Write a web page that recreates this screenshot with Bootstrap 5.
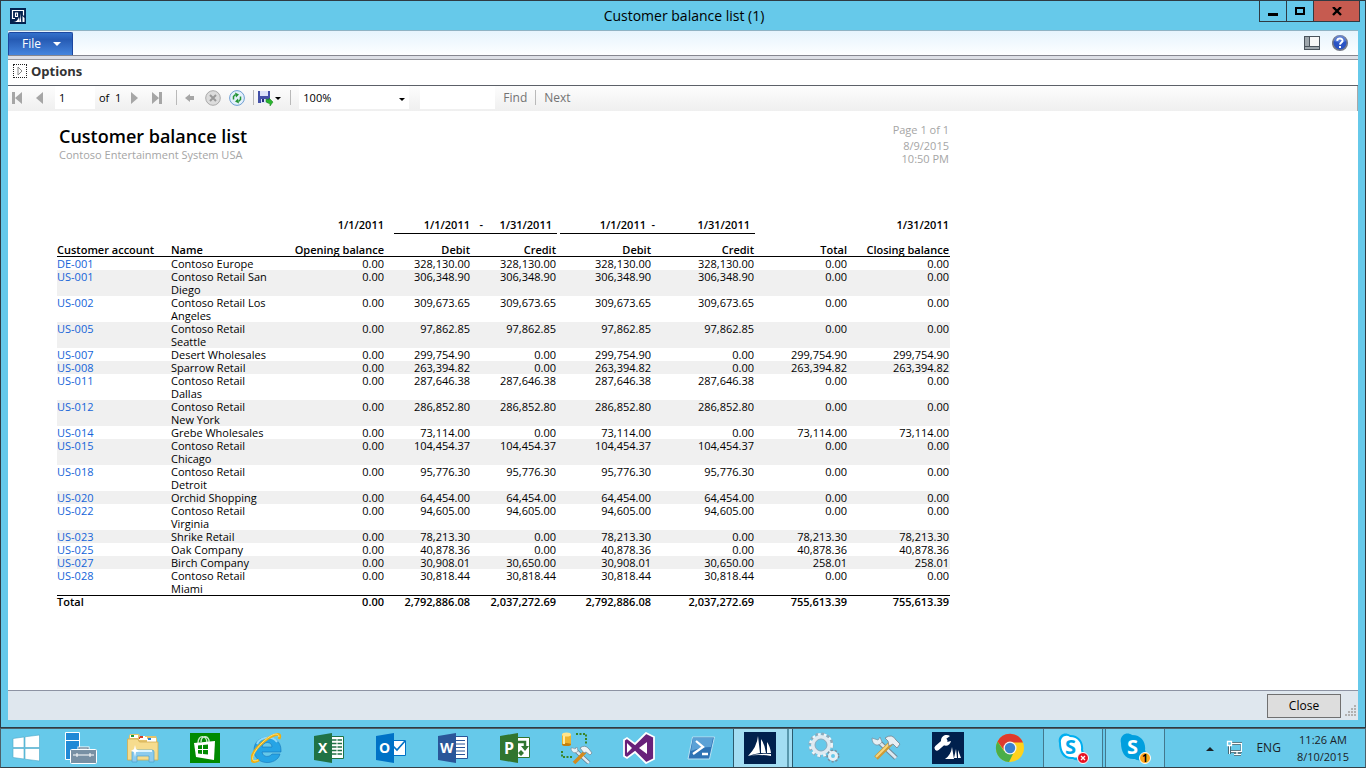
<!DOCTYPE html>
<html lang="en">
<head>
<meta charset="utf-8">
<meta name="viewport" content="width=device-width, initial-scale=1">
<title>Customer balance list (1)</title>
<link href="https://cdn.jsdelivr.net/npm/bootstrap@5.3.0/dist/css/bootstrap.min.css" rel="stylesheet">
<style>
  :root { --sky: #66c9ea; --edge: #2f3a42; }
  body { font-family: "Open Sans", "Noto Sans", sans-serif; font-size: 12px; line-height: 16px; color: #000; background: var(--sky); }
  svg { display: block; flex: none; }
  button { font-family: inherit; color: inherit; }
  .app-window { border: 1px solid var(--edge); padding: 0 7px 7px; min-height: 0; }
  .title-bar { height: 29px; }
  .title-bar h1 { font-size: 14px; line-height: 29px; font-weight: 400; }
  .title-left, .title-right { flex: 1 1 0; }
  .title-right { margin-right: -2px; }
  .win-btn { height: 21px; border: 1px solid var(--edge); border-top: 0; border-right: 0; background: transparent; width: 27px; padding: 0; }
  .win-btn.wide-btn { width: 47px; background: #c65b50; border-right: 1px solid var(--edge); }
  .client { background: #fff; border-top: 1px solid #8fb3c4; min-height: 0; }
  .ribbon { height: 25px; background: linear-gradient(#e6f4fd, #fdfeff); border-bottom: 1px solid #85868f; }
  .file-btn { width: 65px; height: 23px; margin-top: 1px; border: 1px solid #1c47a0; border-bottom: 0; border-radius: 2px 2px 0 0; background: linear-gradient(#3472cc, #265bb4 30%, #4585de); color: #fff; }
  .band { height: 4px; background: #dddfe6; border-bottom: 1px solid #95969d; }
  .options-bar { height: 26px; border-bottom: 1px solid #5c6068; padding: 0 0 4px 5px; }
  .options-bar h2 { font-size: 13px; line-height: 18px; font-weight: 700; color: #333; }
  .expander { width: 14px; height: 14px; border: 1px dotted #222; background: #fff; }
  .viewer-bar { height: 25px; padding-bottom: 2px; background: linear-gradient(#fdfdfd, #efefef); border-right: 1px solid #a8a8a8; color: #000; font-size: 11px; }
  .viewer-bar input, .viewer-bar select { border: 0; background: #fff; height: 23px; font-size: 11px; border-radius: 0; color: #000; }
  .page-box { width: 40px; margin-left: 10px; padding: 0 4px; }
  .zoom-box { width: 110px; appearance: none; padding: 0 4px; }
  .find-box { width: 75px; margin-left: 11px; }
  .rule { width: 1px; height: 15px; background: #b9b9b9; }
  .space-wide { margin-left: 14px; }
  .space-mid { margin-left: 10px; }
  .tool { border: 0; background: transparent; padding: 0; }
  .find-link { color: #737373; font-size: 12px; }
  .report { padding: 12px 0 0 49px; min-height: 0; overflow: hidden; }
  .report-inner { width: 893px; padding: 0 1px 0 2px; }
  .report h3 { font-size: 18px; line-height: 23px; font-weight: 600; margin: 0; padding-top: 2px; -webkit-text-stroke: 0; }
  .muted { color: #a5a5a5; font-size: 11px; line-height: 13px; }
  .page-count { margin-bottom: 3px; }
  .ledger { width: 893px; table-layout: fixed; border-collapse: separate; border-spacing: 0; font-size: 11px; line-height: 13px; margin-top: 53px; }
  .ledger th, .ledger td { padding: 0 1px 0 0; vertical-align: top; text-align: right; }
  .ledger th { font-weight: 600; white-space: nowrap; }
  .ledger b { font-weight: 600; }
  .ledger th:first-child, .ledger td:first-child, .ledger td:nth-child(2), .ledger .lft { text-align: left; }
  .ledger .period th { height: 16px; }
  .ledger .captions th { height: 23px; vertical-align: bottom; border-bottom: 1px solid #000; }
  .ledger tbody tr:nth-child(even) { background: #f0f0f0; }
  .ledger tbody td { height: 13px; }
  .ledger tfoot th { border-top: 1px solid #000; height: 13px; line-height: 12px; }
  .ledger a { color: #1464d8; text-decoration: none; }
  .ledger .span-a, .ledger .span-b { padding: 0; }
  .span-a div { margin: 0 0 0 9px; border-bottom: 1px solid #000; padding: 0 5px 2px 0; }
  .span-b div { margin: 0 0 0 3px; border-bottom: 1px solid #000; padding: 0 5px 2px 0; }
  .span-a b:first-child { width: 76px; }
  .span-a span { width: 13px; }
  .span-b b:first-child { width: 86px; }
  .span-b span { width: 9px; }
  .foot-bar { height: 30px; background: #dfe7ee; border-top: 1px solid #8d93a3; padding-right: 1px; }
  .close-btn { width: 74px; height: 24px; border: 1px solid #707070; background: #dddddd; padding: 1px 0 0; }
  .taskbar { height: 40px; border: 1px solid #4d6069; border-bottom-color: #333f47; }
  .task { border: 0; background: transparent; padding: 0; width: 62px; height: 38px; }
  .task.start { width: 49px; }
  .task.running { background: #79d2ef; border: solid #44788d; border-width: 0 1px; width: 60px; margin-left: 2px; }
  .task.running.active { background: #a3ddf2; border-color: #2c5a6d; margin-left: 1px; position: relative; }
  .task.active::after { content: ""; position: absolute; right: 3px; top: 0; width: 2px; height: 100%; background: #5a98ad; }
  .tray { color: #1b2226; }
  .clock { font-size: 11px; line-height: 17px; }
</style>
</head>
<body class="d-flex flex-column vh-100 overflow-hidden">

<main class="app-window d-flex flex-column flex-grow-1">
  <header class="title-bar d-flex">
    <div class="title-left d-flex align-items-center">
      <svg width="20" height="16" viewBox="0 0 20 16"><path fill="#03224f" d="M2 0h16v16H2z"/><path d="M7 10.500H4.500v-8h11v5M7.500 5v3.500h2V5z" fill="none" stroke="#fff" stroke-width="1.200"/><path fill="#fff" d="M5 14c3 0 5-2 6-5l1 5zM12 5l1.300 9h-1.300zM14.500 8l2 2v4h-2z"/></svg>
    </div>
    <h1 class="m-0">Customer balance list (1)</h1>
    <div class="title-right d-flex justify-content-end align-items-start">
      <button class="win-btn" aria-label="Minimize"><svg class="mx-auto" width="10" height="12"><path d="M0 8h10v3H0z"/></svg></button>
      <button class="win-btn" aria-label="Maximize"><svg class="mx-auto" width="10" height="8"><path d="M1 1h8v6H1z" fill="none" stroke="#000" stroke-width="2"/></svg></button>
      <button class="win-btn wide-btn" aria-label="Close window"><svg class="mx-auto" width="10" height="9"><path d="M1 0l8 8M9 0L1 8" stroke="#000" stroke-width="2.4"/></svg></button>
    </div>
  </header>

  <section class="client d-flex flex-column flex-grow-1">
    <div class="ribbon d-flex justify-content-between">
      <button class="file-btn d-flex align-items-center justify-content-center gap-2 ps-2"><span>File</span><svg class="ms-1" width="8" height="4"><path fill="#fff" d="M0 0h8L4 4z"/></svg></button>
      <div class="d-flex align-items-center gap-2 pe-2">
        <svg width="16" height="14" viewBox="0 0 16 14"><path fill="#4a535c" d="M0 0h16v14H0z"/><path fill="#9ea6ac" d="M1 1h4v9H1zM1 11h14v2H1z"/><path fill="#f7f7f7" d="M6 1h9v9H6z"/></svg>
        <svg class="ms-1" width="18" height="18" viewBox="1 0 18 18"><circle cx="9" cy="9" r="7.3" fill="#2a53c4" stroke="#777b88" stroke-width="1.6"/><path d="M3 7a6 6 0 0 1 12 0q-6 3-12 0" fill="#6b90e6" opacity=".6"/><path d="M6.2 6.8C6.5 3.5 12 4 11.500 7c-.3 1.500-2.300 1.500-2.500 3.600M9 12v2" fill="none" stroke="#fff" stroke-width="2"/></svg>
      </div>
    </div>
    <div class="band"></div>
    <div class="options-bar d-flex align-items-center">
      <button class="expander p-0" aria-label="Expand options"><svg class="mx-auto" width="6" height="10"><path d="M1 1l4 4-4 4z" fill="#fff" stroke="#888"/></svg></button>
      <h2 class="mb-0 ms-1">Options</h2>
    </div>

    <div class="viewer-bar d-flex align-items-center">
      <button class="tool ms-1" aria-label="First page"><svg width="10" height="12"><path fill="#a6a6a6" d="M0 0h3v12H0zM10 0v12L3 6z"/></svg></button>
      <button class="tool space-wide" aria-label="Previous page"><svg width="9" height="12" viewBox="0 0 9 12"><path fill="#a6a6a6" d="M7 0v12L0 6z"/></svg></button>
      <input class="page-box" type="text" value="1" aria-label="Page number">
      <span class="ms-1">of&nbsp; 1</span>
      <button class="tool space-mid" aria-label="Next page"><svg width="7" height="12"><path fill="#a6a6a6" d="M0 0v12l7-6z"/></svg></button>
      <button class="tool space-wide" aria-label="Last page"><svg width="10" height="12"><path fill="#a6a6a6" d="M7 0h3v12H7zM0 0v12l7-6z"/></svg></button>
      <i class="rule space-wide me-2"></i>
      <button class="tool" aria-label="Back"><svg width="10" height="10"><path fill="#a6a6a6" d="M0 5l5-4v2h4v4H5v2z"/></svg></button>
      <button class="tool space-mid" aria-label="Stop"><svg width="16" height="16"><circle cx="8" cy="8" r="7.3" fill="#dcdcdc" stroke="#aaa"/><path d="M5 5l6 6M11 5l-6 6" stroke="#999" stroke-width="2"/></svg></button>
      <button class="tool ms-2" aria-label="Refresh"><svg width="16" height="16"><circle cx="8" cy="8" r="7.400" fill="#e3f0fc" stroke="#6f9fd3"/><path d="M4.500 9.500V6.500L6.500 4.500M11.500 6.500v3l-2 2" fill="none" stroke="#249436" stroke-width="1.500"/><path fill="#249436" d="M6 2.500l4 2-3 3zM10 13.500l-4-2 3-3z"/></svg></button>
      <i class="rule ms-2 me-1"></i>
      <button class="tool d-flex align-items-center" aria-label="Export"><svg width="24" height="16" viewBox="0 0 24 16"><path fill="#4350a8" d="M0 1h12v12H0z"/><path fill="#dce3fa" d="M2 1h8v5H2zM3 9h6v4H3z"/><path fill="#24307c" d="M4 9h2v3H4z"/><path fill="#2bb52f" stroke="#14801b" stroke-width=".5" d="M8 9l3 1V8l4 4-3 4v-2L8 12z"/><path d="M17 7h6l-3 3z"/></svg></button>
      <i class="rule ms-2 me-2"></i>
      <div class="position-relative">
        <select class="zoom-box" aria-label="Zoom"><option>100%</option></select>
        <svg class="position-absolute top-50 end-0 me-1" width="6" height="3"><path d="M0 0h6L3 3z"/></svg>
      </div>
      <input class="find-box" type="text" aria-label="Find text">
      <button class="tool find-link ms-2">Find</button>
      <i class="rule ms-2 me-2"></i>
      <button class="tool find-link">Next</button>
    </div>

    <article class="report flex-grow-1">
      <div class="report-inner d-flex justify-content-between">
        <div>
          <h3>Customer balance list</h3>
          <p class="muted mb-0">Contoso Entertainment System USA</p>
        </div>
        <div class="muted text-end">
          <div class="page-count">Page 1 of 1</div>
          <div>8/9/2015</div>
          <div>10:50 PM</div>
        </div>
      </div>
      <table class="ledger">
        <colgroup><col style="width:114px"><col style="width:100px"><col style="width:114px"><col style="width:86px"><col style="width:86px"><col style="width:95px"><col style="width:103px"><col style="width:93px"><col style="width:102px"></colgroup>
        <thead>
          <tr class="period"><th></th><th></th><th>1/1/2011</th><th colspan="2" class="span-a"><div class="d-flex"><b>1/1/2011</b><span>-</span><b class="flex-grow-1">1/31/2011</b></div></th><th colspan="2" class="span-b"><div class="d-flex"><b>1/1/2011</b><span>-</span><b class="flex-grow-1">1/31/2011</b></div></th><th></th><th>1/31/2011</th></tr>
          <tr class="captions"><th>Customer account</th><th class="lft">Name</th><th>Opening balance</th><th>Debit</th><th>Credit</th><th>Debit</th><th>Credit</th><th>Total</th><th>Closing balance</th></tr>
        </thead>
        <tbody>
          <tr><td><a href="#">DE-001</a></td><td>Contoso Europe</td><td>0.00</td><td>328,130.00</td><td>328,130.00</td><td>328,130.00</td><td>328,130.00</td><td>0.00</td><td>0.00</td></tr>
          <tr><td><a href="#">US-001</a></td><td>Contoso Retail San Diego</td><td>0.00</td><td>306,348.90</td><td>306,348.90</td><td>306,348.90</td><td>306,348.90</td><td>0.00</td><td>0.00</td></tr>
          <tr><td><a href="#">US-002</a></td><td>Contoso Retail Los Angeles</td><td>0.00</td><td>309,673.65</td><td>309,673.65</td><td>309,673.65</td><td>309,673.65</td><td>0.00</td><td>0.00</td></tr>
          <tr><td><a href="#">US-005</a></td><td>Contoso Retail Seattle</td><td>0.00</td><td>97,862.85</td><td>97,862.85</td><td>97,862.85</td><td>97,862.85</td><td>0.00</td><td>0.00</td></tr>
          <tr><td><a href="#">US-007</a></td><td>Desert Wholesales</td><td>0.00</td><td>299,754.90</td><td>0.00</td><td>299,754.90</td><td>0.00</td><td>299,754.90</td><td>299,754.90</td></tr>
          <tr><td><a href="#">US-008</a></td><td>Sparrow Retail</td><td>0.00</td><td>263,394.82</td><td>0.00</td><td>263,394.82</td><td>0.00</td><td>263,394.82</td><td>263,394.82</td></tr>
          <tr><td><a href="#">US-011</a></td><td>Contoso Retail Dallas</td><td>0.00</td><td>287,646.38</td><td>287,646.38</td><td>287,646.38</td><td>287,646.38</td><td>0.00</td><td>0.00</td></tr>
          <tr><td><a href="#">US-012</a></td><td>Contoso Retail New&nbsp;York</td><td>0.00</td><td>286,852.80</td><td>286,852.80</td><td>286,852.80</td><td>286,852.80</td><td>0.00</td><td>0.00</td></tr>
          <tr><td><a href="#">US-014</a></td><td>Grebe Wholesales</td><td>0.00</td><td>73,114.00</td><td>0.00</td><td>73,114.00</td><td>0.00</td><td>73,114.00</td><td>73,114.00</td></tr>
          <tr><td><a href="#">US-015</a></td><td>Contoso Retail Chicago</td><td>0.00</td><td>104,454.37</td><td>104,454.37</td><td>104,454.37</td><td>104,454.37</td><td>0.00</td><td>0.00</td></tr>
          <tr><td><a href="#">US-018</a></td><td>Contoso Retail Detroit</td><td>0.00</td><td>95,776.30</td><td>95,776.30</td><td>95,776.30</td><td>95,776.30</td><td>0.00</td><td>0.00</td></tr>
          <tr><td><a href="#">US-020</a></td><td>Orchid Shopping</td><td>0.00</td><td>64,454.00</td><td>64,454.00</td><td>64,454.00</td><td>64,454.00</td><td>0.00</td><td>0.00</td></tr>
          <tr><td><a href="#">US-022</a></td><td>Contoso Retail Virginia</td><td>0.00</td><td>94,605.00</td><td>94,605.00</td><td>94,605.00</td><td>94,605.00</td><td>0.00</td><td>0.00</td></tr>
          <tr><td><a href="#">US-023</a></td><td>Shrike Retail</td><td>0.00</td><td>78,213.30</td><td>0.00</td><td>78,213.30</td><td>0.00</td><td>78,213.30</td><td>78,213.30</td></tr>
          <tr><td><a href="#">US-025</a></td><td>Oak Company</td><td>0.00</td><td>40,878.36</td><td>0.00</td><td>40,878.36</td><td>0.00</td><td>40,878.36</td><td>40,878.36</td></tr>
          <tr><td><a href="#">US-027</a></td><td>Birch Company</td><td>0.00</td><td>30,908.01</td><td>30,650.00</td><td>30,908.01</td><td>30,650.00</td><td>258.01</td><td>258.01</td></tr>
          <tr><td><a href="#">US-028</a></td><td>Contoso Retail Miami</td><td>0.00</td><td>30,818.44</td><td>30,818.44</td><td>30,818.44</td><td>30,818.44</td><td>0.00</td><td>0.00</td></tr>
        </tbody>
        <tfoot>
          <tr><th>Total</th><th></th><th>0.00</th><th>2,792,886.08</th><th>2,037,272.69</th><th>2,792,886.08</th><th>2,037,272.69</th><th>755,613.39</th><th>755,613.39</th></tr>
        </tfoot>
      </table>
    </article>

    <footer class="foot-bar d-flex justify-content-end align-items-center">
      <button class="close-btn">Close</button>
      <svg class="align-self-end ms-1 mb-1" width="12" height="11"><path fill="#b0b0b0" d="M9 0h2v2H9zM6 3h2v2H6zM9 3h2v2H9zM3 6h2v2H3zM6 6h2v2H6zM9 6h2v2H9zM0 9h2v2H0zM3 9h2v2H3zM6 9h2v2H6zM9 9h2v2H9z"/></svg>
    </footer>
  </section>
</main>

<nav class="taskbar d-flex align-items-center" aria-label="Taskbar">
  <button class="task start" aria-label="Start"><svg class="mx-auto" width="28" height="28"><path fill="#fff" stroke="#4ba7c8" stroke-width=".6" d="M1 4.500l11-1.500v10.500H1zM13 2.800L27.500 1v12.500H13zM1 14.500h11V25L1 23.500zM13 14.500h14.500V27L13 25.200z"/></svg></button>
  <button class="task" aria-label="Server Manager"><svg class="mx-auto" width="32" height="32"><path fill="#2189d6" stroke="#fff" d="M.5.500h14v27H.5z"/><path d="M1 8.500h13" stroke="#fff"/><path d="M14 18v-2h9v2" fill="none" stroke="#fff" stroke-width="3"/><rect x="5.500" y="17.500" width="26" height="14" rx="1" fill="#7890a4" stroke="#fff"/><path d="M14 17v-1h9v1" fill="none" stroke="#7890a4" stroke-width="1.500"/><path d="M8 23h21M12 21v4M25 21v4" stroke="#fff"/></svg></button>
  <button class="task" aria-label="File Explorer"><svg class="mx-auto" width="32" height="30"><path fill="#e4c36c" d="M2 3l1-2h9l1 2h16l1 3v10H1z"/><path fill="#fff" d="M3 2h8v3H3zM12 4h8v3h-8zM20 6h9v3h-9z"/><path fill="#1d9a38" d="M4 2h3v2H4z"/><path fill="#d33b25" d="M12 4h4v2h-4z"/><path fill="#2783d8" d="M21 6h3v2h-3z"/><path fill="#f6dc8e" stroke="#d3ad50" stroke-width=".8" d="M.5 6h10l2 3H31v18H.5z"/><path fill="#fff" d="M13 3h5v3h-5zM21 5h8v3h-8z"/><path fill="#d33b25" d="M13 3h3v2h-3z"/><path fill="#2783d8" d="M21 5h3v2h-3z"/><path fill="#8ccbee" stroke="#4ca0cf" stroke-width=".7" d="M5 29V19q0-2 2-2h18q2 0 2 2v10h-5v-6H10v6z"/><path d="M7 18h18" stroke="#ddf4ff" stroke-width="2"/><path fill="#fff" d="M8 12l1 4 3 2-3 1-1 5-1-5-3-1 3-2z"/></svg></button>
  <button class="task" aria-label="Store"><svg class="mx-auto" width="30" height="30"><path fill="#008a00" d="M0 0h30v30H0z"/><path d="M8 10c0-9 9-8 9 0M11 9c0-8 9-6 8 0" fill="none" stroke="#cce9cc" stroke-width="1.400"/><path fill="#fff" d="M4 10l21-2-1 19L6 24z"/><path fill="#008a00" d="M8 12.500l4-.5v4H8zM13 12l5-.6V16h-5zM8 17h4v4l-4-.5zM13 17h5v4.600L13 21z"/></svg></button>
  <button class="task" aria-label="Internet Explorer"><svg class="mx-auto" width="32" height="32"><path fill="#26a4e5" stroke="#1674b8" stroke-width=".6" fill-rule="evenodd" d="M3 18C3 1 30 1 30 18v2H11c1 6 8 5 10 2h8C26 34 3 34 3 18zm8-3h10c0-6-9-6-10 0z"/><path d="M6 12C9 5 21 3 26 10" stroke="#91dafa" stroke-width="2" fill="none"/><path d="M8 28C-3 34-1 22 10 12S32-1 28 7" fill="none" stroke="#edaf13" stroke-width="2.700"/><path d="M7 28C-2 32 1 21 11 11S28 0 28 5" fill="none" stroke="#ffe275"/></svg></button>
  <button class="task" aria-label="Excel"><svg class="mx-auto" width="31" height="30"><path fill="#fff" stroke="#207245" d="M16 3.500h13.500v22H16z"/><path d="M18 7h10M18 10.500h10M18 14h10M18 17.500h10M18 21h10" stroke="#207245" stroke-width="1.700"/><path d="M23 5v18" stroke="#fff"/><path fill="#207245" d="M0 3l18-3v30L0 27z"/><text x="4" y="20" fill="#fff" font-size="14" font-weight="700">X</text></svg></button>
  <button class="task" aria-label="Outlook"><svg class="mx-auto" width="31" height="30"><path fill="#fff" stroke="#0072c6" d="M16 7.500h13.500v15H16z"/><path d="M17 13l4 4 8-9" fill="none" stroke="#0072c6" stroke-width="1.700"/><path fill="#0072c6" d="M0 3l18-3v30L0 27z"/><text x="3" y="20" fill="#fff" font-size="14" font-weight="700">O</text></svg></button>
  <button class="task" aria-label="Word"><svg class="mx-auto" width="31" height="30"><path fill="#fff" stroke="#2a5699" d="M16 3.500h13.500v22H16z"/><path d="M18 7.500h9M18 11h9M18 14.500h9M18 18h9M18 21.500h9" stroke="#2a5699"/><path fill="#2a5699" d="M0 3l18-3v30L0 27z"/><text x="2" y="20" fill="#fff" font-size="14" font-weight="700">W</text></svg></button>
  <button class="task" aria-label="Project"><svg class="mx-auto" width="31" height="30"><path fill="#fff" stroke="#31752f" d="M16 4.500h13.500v20H16z"/><path d="M18 9h7v6" fill="none" stroke="#31752f" stroke-width="2.500"/><path fill="#31752f" d="M21 13h8l-4 5zM18 20l3-3 3 3-3 3z"/><path fill="#31752f" d="M0 3l18-3v30L0 27z"/><text x="4" y="21" fill="#fff" font-size="16" font-weight="700">P</text></svg></button>
  <button class="task" aria-label="Database tools"><svg class="mx-auto" width="32" height="32"><path fill="#edb32d" d="M1 2h9v11H1z"/><ellipse cx="5.500" cy="2.500" rx="4.500" ry="2" fill="#ffe58c"/><ellipse cx="5.500" cy="12.500" rx="4.500" ry="1.500" fill="#c37f0d"/><path d="M3 4v8" stroke="#ffeb9d" stroke-width="2"/><path d="M15 2h10v10M1 19v6h11" fill="none" stroke="#3a8428" stroke-width="2" stroke-dasharray="2 1.500"/><path d="M28 31L13 17" stroke="#61798b" stroke-width="4"/><path d="M28 31L13 17" stroke="#dfebf1" stroke-width="2.500"/><path d="M10 16c0 5 5 6 7 3l-1-4-2 2-2-1z" fill="#e8f1f6" stroke="#758b99" stroke-width=".6"/><path d="M13 31l11-11" stroke="#d48a1d" stroke-width="3.500"/><path d="M19 16q5-4 9 1l3 4-2 2-4-3-2 1z" fill="#eef3f6" stroke="#6d7f8c" stroke-width=".7"/></svg></button>
  <button class="task" aria-label="Visual Studio"><svg class="mx-auto" width="32" height="32"><path fill="#68217a" stroke="#fff" stroke-width="1.800" d="M1 8l3-2 8 6L23 1l8 4v22l-8 4-11-11-8 6-3-2z"/><path fill="#fff" d="M4 11v10l5-5zM24 10v12l-8-6z"/></svg></button>
  <button class="task" aria-label="PowerShell"><svg class="mx-auto" width="28" height="24"><path fill="#2e73b5" stroke="#b8e1f4" d="M5.500 1h22l-5 22H1z"/><path fill="#5ba1d6" d="M6 2h20l-2 9q-10 0-20 4z"/><path d="M9 5l7 6-10 7M15 18h6" fill="none" stroke="#fff" stroke-width="2.300"/></svg></button>
  <button class="task running active" aria-label="Dynamics AX"><svg class="ms-2" width="34" height="32" viewBox="-2 0 34 32"><path fill="#00204d" d="M0 0h32v32H0z"/><path fill="#fff" d="M4 24Q13 15 14 4l2 17q-6 1-12 3zM17 21V7q4 6 5 14zM23 21V10q3 4 4 11zM4 24q12-3 23-2v2q-13-2-23 0z"/></svg></button>
  <button class="task" aria-label="Services"><svg class="mx-auto" width="32" height="32"><circle cx="13" cy="13" r="10.500" fill="none" stroke="#8fa9b9" stroke-width="4" stroke-dasharray="3 2.500"/><circle cx="13" cy="13" r="10" fill="none" stroke="#eef5f9" stroke-width="4" stroke-dasharray="2.500 3"/><circle cx="13" cy="13" r="8" fill="none" stroke="#dfeaf1" stroke-width="4"/><circle cx="13" cy="13" r="6" fill="none" stroke="#87a9bd"/><circle cx="25" cy="24" r="5" fill="none" stroke="#758f9f" stroke-width="3" stroke-dasharray="2 1.500"/><circle cx="25" cy="24" r="3.500" fill="none" stroke="#e7f0f5" stroke-width="3"/></svg></button>
  <button class="task" aria-label="Tools"><svg class="mx-auto" width="30" height="26"><path d="M7 6l18 17" stroke="#6f8999" stroke-width="5"/><path d="M7 6l18 17" stroke="#dce8ef" stroke-width="3"/><path d="M1 3c0 8 7 9 10 4L9 2 7 5 4 4z" fill="#e6eff4" stroke="#748d9b" stroke-width=".7"/><path d="M5 23L20 8" stroke="#ce9a35" stroke-width="5"/><path d="M5 22L19 8" stroke="#f6d77f" stroke-width="2"/><path d="M14 3q7-5 11 2l4 4-3 4-4-4-4 2-1-5z" fill="#e8eff3" stroke="#74838e" stroke-width=".8"/></svg></button>
  <button class="task" aria-label="AX configuration"><svg class="mx-auto" width="32" height="32"><path fill="#00204d" d="M0 0h32v32H0z"/><path d="M5 16l8-7" stroke="#fff" stroke-width="5" stroke-linecap="round"/><path fill="#fff" d="M9 9c0-6 6-7 9-5l-4 3 1 3 4-1c-1 5-6 6-9 3zM13 27q6-4 7-12l2 12zM22 26l2-9 1 9zM26 26v-8l3 8z"/></svg></button>
  <button class="task" aria-label="Chrome"><svg class="mx-auto" width="30" height="30"><circle cx="15" cy="15" r="14" fill="#ffd21c"/><path fill="#df3a2d" d="M2.500 8.500A14 14 0 0 1 28 9.500H15L9 17z"/><path fill="#4aae48" d="M2.500 8.500L9 18l9 3-4 8A14 14 0 0 1 2.500 8.500z"/><circle cx="15" cy="15" r="6.500" fill="#f4f4f4"/><circle cx="15" cy="15" r="5.200" fill="#3b82d0"/></svg></button>
  <button class="task running" aria-label="Lync, offline"><svg class="mx-auto" width="32" height="32"><path fill="#00aff0" d="M2 11C0 3 8-1 13 3c10 0 14 8 13 15 4 8-4 13-10 9C6 28 2 20 2 11z"/><path fill="#fff" d="M4 11c-1-6 5-9 9-6 8 0 12 6 11 13 2 6-3 9-8 7C8 26 4 19 4 11z"/><text x="8" y="22" font-size="20" font-weight="700" fill="#00a6e8">S</text><circle cx="26" cy="26" r="5.500" fill="#e81123" stroke="#fff"/><path d="M24 24l4 4M28 24l-4 4" stroke="#fff" stroke-width="1.300"/></svg></button>
  <button class="task running" aria-label="Skype, 1 message"><svg class="mx-auto" width="32" height="32"><path fill="#009fde" d="M2 11C0 3 8-1 13 3c10 0 14 8 13 15 4 8-4 13-10 9C6 28 2 20 2 11z"/><text x="8" y="22" font-size="20" font-weight="700" fill="#fff">S</text><circle cx="26" cy="26" r="5.500" fill="#f9a61a" stroke="#fff"/><text x="23" y="30" font-size="10" font-weight="700">1</text></svg></button>
  <div class="tray d-flex align-items-center ms-auto pe-3">
    <svg width="8" height="5"><path fill="#1b2226" d="M0 5l4-4 4 4z"/></svg>
    <svg class="ms-2 ps-1" width="20" height="16"><path d="M6 3.500h10v8H5M8 14.500h7M11 12v2M3.500 6v8" fill="none" stroke="#245061" stroke-width="3"/><path d="M6 3.500h9.500v8H5M8 14.500h7M11 12v2M3.500 6v8M1.500 1.500h4v4h-4z" fill="none" stroke="#fff" stroke-width="1.300"/></svg>
    <span class="space-wide">ENG</span>
    <div class="clock text-center ms-3"><div>11:26 AM</div><div>8/10/2015</div></div>
  </div>
</nav>
<script src="https://cdn.jsdelivr.net/npm/bootstrap@5.3.0/dist/js/bootstrap.bundle.min.js"></script>
</body>
</html>
